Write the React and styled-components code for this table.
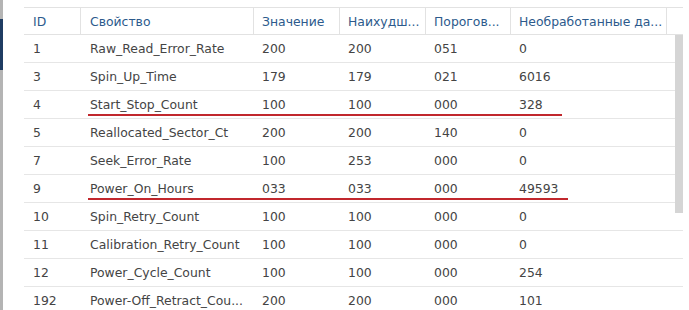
import React from "react";
import styled, { createGlobalStyle } from "styled-components";

const GlobalStyle = createGlobalStyle`
  html, body { margin: 0; padding: 0; background: #ffffff; }
  body { width: 689px; height: 310px; overflow: hidden; font-family: "DejaVu Sans", Verdana, sans-serif; }
`;

const COLS = "57px 173px 86px 86px 85px 156px 16px";

const Page = styled.div`
  display: flex;
  width: 689px;
  height: 310px;
  overflow: hidden;
`;

const EdgeStrip = styled.div`
  width: 3px;
  flex: none;
  background: #b4b4b4;
  display: flex;
  flex-direction: column;
`;

const EdgeMark = styled.div`
  margin-top: 19px;
  height: 51px;
  background: #1f3c62;
`;

const Content = styled.div`
  flex: 1;
  padding: 7px 0 0 21px;
`;

const Table = styled.div`
  width: 659px;
  font-size: 12.4px;
`;

const HeaderRow = styled.div`
  display: grid;
  grid-template-columns: ${COLS};
  height: 26px;
  border-top: 1px solid #e2e2e2;
  border-bottom: 1px solid #e2e2e2;
`;

const HeadCell = styled.div`
  display: flex;
  align-items: center;
  padding-left: ${(p) => p.$pad || 8}px;
  color: #2c5a8c;
  white-space: nowrap;
  overflow: hidden;
  border-right: ${(p) => (p.$last ? "none" : "1px solid #e2e2e2")};
`;

const Body = styled.div`
  position: relative;
`;

const Row = styled.div`
  position: relative;
  display: grid;
  grid-template-columns: ${COLS};
  height: 27px;
  border-bottom: 1px solid #e6e6e6;
`;

const Cell = styled.div`
  display: flex;
  align-items: center;
  padding-left: ${(p) => p.$pad || 8}px;
  color: #444444;
  white-space: nowrap;
  overflow: hidden;
`;

const Underline = styled.div`
  position: absolute;
  left: 64px;
  top: 23px;
  height: 2px;
  background: #c1272d;
`;

const ScrollThumb = styled.div`
  position: absolute;
  right: 0;
  top: 0;
  width: 8px;
  height: 178px;
  background: #d5d5d5;
`;

const headers = [
  "ID",
  "Свойство",
  "Значение",
  "Наихудш...",
  "Порогов...",
  "Необработанные да...",
];

const rows = [
  ["1", "Raw_Read_Error_Rate", "200", "200", "051", "0"],
  ["3", "Spin_Up_Time", "179", "179", "021", "6016"],
  ["4", "Start_Stop_Count", "100", "100", "000", "328", 474],
  ["5", "Reallocated_Sector_Ct", "200", "200", "140", "0"],
  ["7", "Seek_Error_Rate", "100", "253", "000", "0"],
  ["9", "Power_On_Hours", "033", "033", "000", "49593", 480],
  ["10", "Spin_Retry_Count", "100", "100", "000", "0"],
  ["11", "Calibration_Retry_Count", "100", "100", "000", "0"],
  ["12", "Power_Cycle_Count", "100", "100", "000", "254"],
  ["192", "Power-Off_Retract_Cou...", "200", "200", "000", "101"],
];

export default function App() {
  return (
    <>
      <GlobalStyle />
      <Page>
        <EdgeStrip>
          <EdgeMark />
        </EdgeStrip>
        <Content>
          <Table>
            <HeaderRow>
              {headers.map((h, i) => (
                <HeadCell key={i} $pad={i < 2 ? 9 : 8}>
                  {h}
                </HeadCell>
              ))}
              <HeadCell $last />
            </HeaderRow>
            <Body>
              {rows.map((r, ri) => (
                <Row key={ri}>
                  {r.slice(0, 6).map((c, ci) => (
                    <Cell key={ci} $pad={ci < 2 ? 9 : 8}>
                      {c}
                    </Cell>
                  ))}
                  <Cell />
                  {r[6] ? <Underline style={{ width: r[6] }} /> : null}
                </Row>
              ))}
              <ScrollThumb />
            </Body>
          </Table>
        </Content>
      </Page>
    </>
  );
}
